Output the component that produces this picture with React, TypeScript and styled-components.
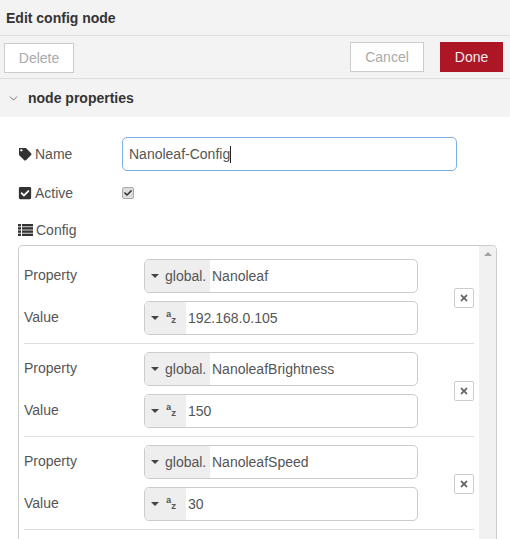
import { createGlobalStyle } from "styled-components";
import styled from "styled-components";
import { FaCheck, FaCheckSquare, FaTag, FaTimes } from "react-icons/fa";
import { ChevronDown } from "lucide-react";

const GlobalStyle = createGlobalStyle`
  html, body {
    margin: 0;
    padding: 0;
    background: #fff;
    font-family: "Liberation Sans", Arial, sans-serif;
    font-size: 14px;
    color: #555;
  }
`;

const Page = styled.div`
  width: 510px;
  height: 539px;
  display: flex;
  flex-direction: column;
  overflow: hidden;
`;

const TitleBar = styled.div`
  height: 35px;
  flex: none;
  display: flex;
  align-items: center;
  padding-left: 6px;
  background: #f3f3f3;
  border-bottom: 1px solid #ddd;
  font-weight: bold;
  color: #333;
`;

const Toolbar = styled.div`
  box-sizing: border-box;
  height: 43px;
  flex: none;
  display: flex;
  align-items: flex-start;
  padding: 6px 7px 0 4px;
  background: #f3f3f3;
  border-bottom: 1px solid #ddd;
`;

const ToolButton = styled.div<{ $primary?: boolean; $width: number; $drop?: boolean }>`
  box-sizing: border-box;
  width: ${(p) => p.$width}px;
  height: 30px;
  display: flex;
  align-items: center;
  justify-content: center;
  margin-top: ${(p) => (p.$drop ? 1 : 0)}px;
  background: ${(p) => (p.$primary ? "#ad1625" : "#fff")};
  border: 1px solid ${(p) => (p.$primary ? "#ad1625" : "#ccc")};
  color: ${(p) => (p.$primary ? "#eee" : "#aaa")};
`;

const Spacer = styled.div`
  flex: 1;
`;

const ButtonGap = styled.div`
  width: 16px;
`;

const SectionHeader = styled.div`
  height: 38px;
  flex: none;
  display: flex;
  align-items: center;
  gap: 8px;
  padding-left: 7px;
  background: #f3f3f3;
  font-weight: bold;
  color: #333;
`;

const Form = styled.div`
  flex: 1;
  min-height: 0;
  display: flex;
  flex-direction: column;
  padding: 20px 13px 0 18px;
`;

const FormRow = styled.div<{ $height: number; $bottom: number }>`
  height: ${(p) => p.$height}px;
  margin-bottom: ${(p) => p.$bottom}px;
  display: flex;
  align-items: center;
  flex: none;
`;

const FormLabel = styled.div`
  width: 104px;
  display: flex;
  align-items: center;
  gap: 3px;
  color: #555;

  svg {
    flex: none;
    width: 14px;
    height: 14px;
    color: #333;
  }
`;

const TagIcon = styled(FaTag)`
  box-sizing: border-box;
  padding: 0.5px;
`;

const NameInput = styled.div`
  box-sizing: border-box;
  width: 335px;
  height: 34px;
  display: flex;
  align-items: center;
  padding-left: 6px;
  border: 1px solid #7eaee8;
  border-radius: 5px;
  color: #555;
`;

const Caret = styled.span`
  width: 1px;
  height: 17px;
  background: #222;
`;

const Checkbox = styled.div`
  box-sizing: border-box;
  width: 12px;
  height: 12px;
  display: flex;
  align-items: center;
  justify-content: center;
  background: #ddd;
  border: 1px solid #aaa;
  border-radius: 2px;
  font-size: 8px;
  color: #333;
`;

const ConfigLabel = styled.div`
  flex: none;
  height: 16px;
  margin-top: 1px;
  margin-bottom: 7px;
  display: flex;
  align-items: center;
  gap: 3px;
  color: #555;
`;

const ListBox = styled.div`
  flex: 1;
  min-height: 0;
  display: flex;
  box-sizing: content-box;
  border: 1px solid #ccc;
  border-bottom: none;
  border-radius: 5px 5px 0 0;
  overflow: hidden;
`;

const ListBody = styled.div`
  flex: 1;
  padding: 5px 5px 0;
`;

const Scrollbar = styled.div`
  width: 17px;
  flex: none;
  display: flex;
  justify-content: center;
  padding-top: 6px;
  background: #f1f1f1;
`;

const ScrollArrow = styled.div`
  width: 0;
  height: 0;
  border-left: 4px solid transparent;
  border-right: 4px solid transparent;
  border-bottom: 4px solid #a3a3a3;
`;

const ConfigRow = styled.div`
  display: flex;
  align-items: center;
  padding: 8px 0;
  border-bottom: 1px solid #ddd;
`;

const RowFields = styled.div`
  flex: 1;
  display: flex;
  flex-direction: column;
  gap: 8px;
`;

const FieldLine = styled.div`
  display: flex;
  align-items: center;
`;

const FieldLabel = styled.div`
  width: 120px;
  margin-top: -3px;
  color: #555;
`;

const TypedInput = styled.div`
  box-sizing: border-box;
  width: 274px;
  height: 34px;
  display: flex;
  align-items: stretch;
  border: 1px solid #ccc;
  border-radius: 5px;
  overflow: hidden;
`;

const TypeSelect = styled.div<{ $width: number }>`
  width: ${(p) => p.$width}px;
  flex: none;
  display: flex;
  align-items: center;
  gap: 6px;
  padding-left: 6px;
  box-sizing: border-box;
  background: #eee;
  color: #555;
`;

const TypeCaret = styled.div`
  width: 0;
  height: 0;
  flex: none;
  border-left: 4.5px solid transparent;
  border-right: 4.5px solid transparent;
  border-top: 4.5px solid #444;
`;

const AzIcon = styled.div`
  width: 11px;
  height: 15px;
  position: relative;
  margin-left: 1px;
  font-family: "Liberation Mono", monospace;
  font-size: 9px;
  font-weight: bold;
  line-height: 9px;
  color: #555;
`;

const AzLetter = styled.span<{ $low?: boolean }>`
  position: absolute;
  left: ${(p) => (p.$low ? 5 : 0)}px;
  top: ${(p) => (p.$low ? 6 : 0)}px;
`;

const TypedValue = styled.div`
  display: flex;
  align-items: center;
  padding-left: 2px;
  color: #555;
`;

const RemoveButton = styled.div`
  box-sizing: border-box;
  width: 20px;
  height: 20px;
  margin-top: 2px;
  display: flex;
  align-items: center;
  justify-content: center;
  background: #fff;
  border: 1px solid #ccc;
  border-radius: 2px;
  font-size: 10px;
  color: #666;
`;

// square bullets, as in the Font Awesome 4 list glyph
const ListIcon = () => (
  <svg width="15" height="12" viewBox="0 0 15 12" fill="#333">
    <rect x="0" y="0" width="3" height="2.4" />
    <rect x="4" y="0" width="11" height="2.4" />
    <rect x="0" y="3.2" width="3" height="2.4" />
    <rect x="4" y="3.2" width="11" height="2.4" />
    <rect x="0" y="6.4" width="3" height="2.4" />
    <rect x="4" y="6.4" width="11" height="2.4" />
    <rect x="0" y="9.6" width="3" height="2.4" />
    <rect x="4" y="9.6" width="11" height="2.4" />
  </svg>
);

const entries = [
  { property: "Nanoleaf", value: "192.168.0.105" },
  { property: "NanoleafBrightness", value: "150" },
  { property: "NanoleafSpeed", value: "30" },
];

export default function App() {
  return (
    <Page>
      <GlobalStyle />
      <TitleBar>Edit config node</TitleBar>
      <Toolbar>
        <ToolButton $width={70} $drop>
          Delete
        </ToolButton>
        <Spacer />
        <ToolButton $width={74}>Cancel</ToolButton>
        <ButtonGap />
        <ToolButton $width={63} $primary>
          Done
        </ToolButton>
      </Toolbar>
      <SectionHeader>
        <ChevronDown size={13} color="#555" strokeWidth={1.5} />
        node properties
      </SectionHeader>
      <Form>
        <FormRow $height={34} $bottom={16}>
          <FormLabel>
            <TagIcon />
            Name
          </FormLabel>
          <NameInput>
            Nanoleaf-Config
            <Caret />
          </NameInput>
        </FormRow>
        <FormRow $height={12} $bottom={22}>
          <FormLabel>
            <FaCheckSquare />
            Active
          </FormLabel>
          <Checkbox>
            <FaCheck />
          </Checkbox>
        </FormRow>
        <ConfigLabel>
          <ListIcon />
          Config
        </ConfigLabel>
        <ListBox>
          <ListBody>
            {entries.map((entry) => (
              <ConfigRow key={entry.property}>
                <RowFields>
                  <FieldLine>
                    <FieldLabel>Property</FieldLabel>
                    <TypedInput>
                      <TypeSelect $width={65}>
                        <TypeCaret />
                        global.
                      </TypeSelect>
                      <TypedValue>{entry.property}</TypedValue>
                    </TypedInput>
                  </FieldLine>
                  <FieldLine>
                    <FieldLabel>Value</FieldLabel>
                    <TypedInput>
                      <TypeSelect $width={41}>
                        <TypeCaret />
                        <AzIcon>
                          <AzLetter>a</AzLetter>
                          <AzLetter $low>z</AzLetter>
                        </AzIcon>
                      </TypeSelect>
                      <TypedValue>{entry.value}</TypedValue>
                    </TypedInput>
                  </FieldLine>
                </RowFields>
                <RemoveButton>
                  <FaTimes />
                </RemoveButton>
              </ConfigRow>
            ))}
          </ListBody>
          <Scrollbar>
            <ScrollArrow />
          </Scrollbar>
        </ListBox>
      </Form>
    </Page>
  );
}
